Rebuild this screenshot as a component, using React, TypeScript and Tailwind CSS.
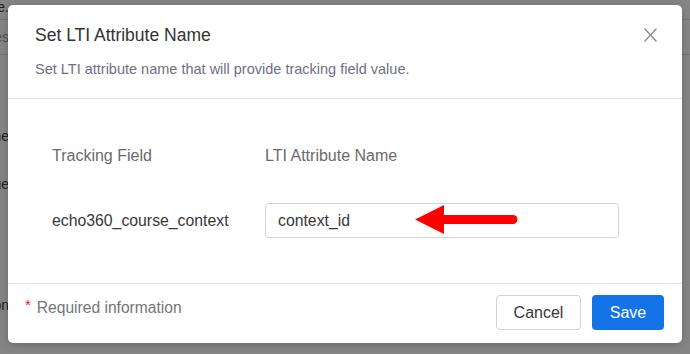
import React from "react";

function BgText({ text, light }: { text: string; light?: boolean }) {
  return (
    <div className="flex w-[9px] justify-end overflow-visible whitespace-nowrap">
      <span className={light ? "text-[#999]" : "text-[#444]"}>{text}</span>
    </div>
  );
}

export default function App() {
  return (
    <div
      className="relative h-[354px] w-[690px] overflow-hidden bg-white"
      style={{ fontFamily: '"Liberation Sans", Arial, sans-serif' }}
    >
      {/* page behind the dialog */}
      <div className="flex flex-col text-[14px]">
        <div className="flex h-[20px] items-center border-b border-[#dcdcdc] pb-[4px]">
          <BgText text="Set name." />
        </div>
        <div className="flex h-[35px] items-center border-b border-[#dcdcdc]">
          <BgText text="Names" light />
        </div>
        <div className="flex h-[70px]" />
        <div className="flex h-[22px] items-center">
          <BgText text="Name" />
        </div>
        <div className="flex h-[26px]" />
        <div className="flex h-[22px] items-center">
          <BgText text="Value" />
        </div>
        <div className="flex h-[99px]" />
        <div className="flex h-[22px] items-center">
          <BgText text="Information" />
        </div>
      </div>

      {/* overlay */}
      <div className="absolute inset-0 bg-black/[0.48]" />

      {/* dialog */}
      <div className="absolute left-[8px] top-[5px] flex h-[338px] w-[674px] flex-col rounded-[5px] bg-white shadow-[0_2px_8px_rgba(0,0,0,0.2)]">
        {/* header */}
        <div className="flex h-[94px] items-start justify-between border-b border-[#e3e3e3] pl-[27px] pr-[25px] pt-[18px]">
          <div className="flex flex-col">
            <div className="text-[17.5px] leading-[24px] text-[#333]">
              Set LTI Attribute Name
            </div>
            <div className="mt-[12px] text-[14.5px] leading-[20px] text-[#706f82]">
              Set LTI attribute name that will provide tracking field value.
            </div>
          </div>
          <button className="mt-[5px] flex h-[14px] w-[13px] items-center justify-center">
            <svg width="13" height="14" viewBox="0 0 13 14">
              <path
                d="M0.5 0.5 L12.5 13.5 M12.5 0.5 L0.5 13.5"
                stroke="#8a8a8a"
                strokeWidth="1.3"
                fill="none"
              />
            </svg>
          </button>
        </div>

        {/* body */}
        <div className="flex h-[185px] flex-col border-b border-[#e3e3e3] pl-[44px] pr-[63px] pt-[45px]">
          <div className="grid grid-cols-[213px_1fr] text-[16px] leading-[24px] text-[#6a6a6a]">
            <div>Tracking Field</div>
            <div>LTI Attribute Name</div>
          </div>
          <div className="mt-[35px] grid grid-cols-[213px_1fr] items-center text-[15.8px]">
            <div className="text-[#383838]">echo360_course_context</div>
            <div className="flex h-[35px] items-center rounded-[4px] border border-[#d4d4d4] pl-[12px] text-[#383838]">
              context_id
            </div>
          </div>
        </div>

        {/* footer */}
        <div className="flex flex-1 items-start justify-between pl-[17px] pr-[18px] pt-[11px]">
          <div className="mt-[3px] flex items-start">
            <span className="mt-[-3px] text-[15px] leading-[20px] text-[#e8171d]">*</span>
            <span className="ml-[6px] text-[15.6px] leading-[20px] text-[#757575]">
              Required information
            </span>
          </div>
          <div className="flex items-center gap-[11px]">
            <button className="flex h-[35px] w-[85px] items-center justify-center rounded-[4px] border border-[#d3d3d3] bg-white text-[16px] text-[#383838]">
              Cancel
            </button>
            <button className="flex h-[35px] w-[72px] items-center justify-center rounded-[4px] bg-[#1473e6] text-[16px] text-white">
              Save
            </button>
          </div>
        </div>
      </div>

      {/* annotation arrow */}
      <svg
        className="pointer-events-none absolute left-[413px] top-[203px]"
        width="108"
        height="34"
        viewBox="0 0 108 34"
      >
        <polygon points="2,16.5 31,2 31,31" fill="#ff0000" />
        <line
          x1="29"
          y1="16.5"
          x2="100"
          y2="16.5"
          stroke="#ff0000"
          strokeWidth="9"
          strokeLinecap="round"
        />
      </svg>
    </div>
  );
}
